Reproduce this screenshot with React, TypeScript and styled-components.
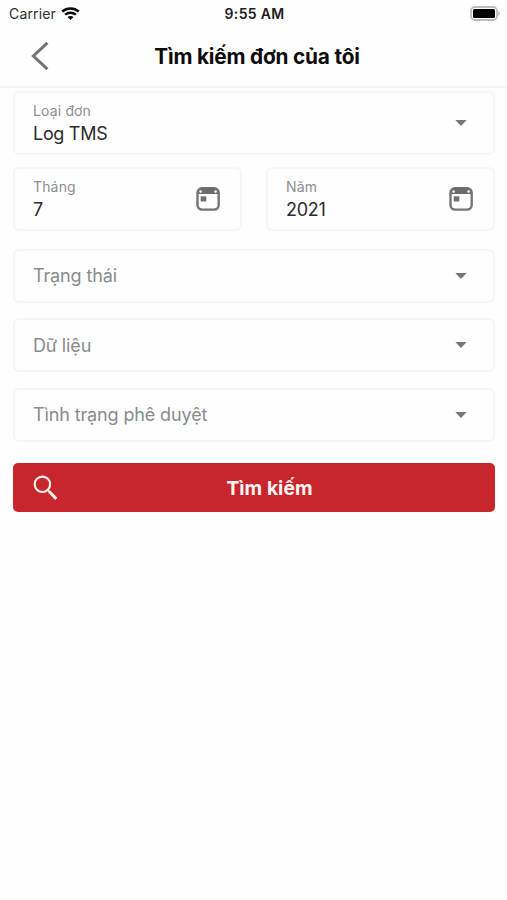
import React from "react";
import styled, { createGlobalStyle } from "styled-components";

const GlobalStyle = createGlobalStyle`
  * { box-sizing: border-box; }
  body {
    margin: 0;
    background: #fefefe;
    font-family: Inter, "Noto Sans", sans-serif;
  }
`;

const Screen = styled.div`
  width: 507px;
  height: 900px;
  background: #fefefe;
  overflow: hidden;
`;

const StatusBar = styled.div`
  display: grid;
  grid-template-columns: 1fr auto 1fr;
  align-items: center;
  height: 28px;
  padding: 0 7px 0 9px;
`;

const Carrier = styled.div`
  display: flex;
  align-items: center;
  gap: 5px;
  font-size: 14px;
  line-height: 28px;
  letter-spacing: 0.15px;
  color: #2c2c2c;
`;

const Clock = styled.div`
  font-size: 14px;
  font-weight: 600;
  line-height: 28px;
  letter-spacing: 0.3px;
  color: #1c1c1c;
`;

const BatterySlot = styled.div`
  display: flex;
  justify-content: flex-end;
  margin-top: -1px;
`;

const NavBar = styled.header`
  display: grid;
  grid-template-columns: 80px 1fr 73px;
  align-items: center;
  height: 60px;
  padding-bottom: 2px;
  border-bottom: 2px solid #f6f6f6;
`;

const BackButton = styled.button`
  display: flex;
  align-items: center;
  justify-content: center;
  height: 40px;
  padding: 0;
  border: 0;
  background: none;
`;

const Title = styled.h1`
  margin: 0;
  padding-top: 2px;
  text-align: center;
  font-size: 20.8px;
  font-weight: 650;
  line-height: 28px;
  letter-spacing: -0.18px;
  color: #0c0c0c;
`;

const Form = styled.form`
  display: flex;
  flex-direction: column;
  padding: 3px 12px 0 13px;
`;

const Pair = styled.div`
  display: grid;
  grid-template-columns: 1fr 1fr;
  column-gap: 24px;
  margin: 12px 0 18px;
`;

const Field = styled.div<{ $tall?: boolean }>`
  display: flex;
  align-items: center;
  justify-content: space-between;
  height: ${(p) => (p.$tall ? 64 : 54)}px;
  padding: 0 19px 0 18px;
  border: 2px solid #f5f6f6;
  border-radius: 6px;
`;

const FieldText = styled.div`
  display: flex;
  flex-direction: column;
`;

const Label = styled.span`
  font-size: 14px;
  line-height: 19px;
  letter-spacing: 0.15px;
  color: #8b8e92;
`;

const Value = styled.span`
  padding-top: 1px;
  font-size: 18px;
  line-height: 25px;
  letter-spacing: -0.3px;
  color: #2b2b2b;
`;

const Placeholder = styled.span`
  padding-top: 1px;
  font-size: 18px;
  line-height: 24px;
  letter-spacing: -0.13px;
  color: #878b8f;
`;

const IconSlot = styled.span`
  display: flex;
  justify-content: center;
  width: 26px;
`;

const Choices = styled.div`
  display: grid;
  row-gap: 15.5px;
  margin-top: -0.5px;
`;

const SearchButton = styled.button`
  display: grid;
  grid-template-columns: 64px 1fr 33px;
  align-items: center;
  height: 49px;
  margin: 21.5px 0 0;
  padding: 0;
  border: 0;
  border-radius: 5px;
  background: #c7262c;
  color: #fff5f2;
  font-family: inherit;
  font-size: 19.3px;
  font-weight: 650;
  letter-spacing: 0.05px;
`;

const SearchIconSlot = styled.span`
  display: flex;
  justify-content: center;
`;

const WifiIcon = () => (
  <svg width="19" height="14" viewBox="0 0 19 14" fill="none" stroke="#080808">
    <path d="M1.200 4.600C6 .4 13 .4 17.800 4.600" strokeWidth="2.600" />
    <path d="M4.100 7.700C7.200 5 11.800 5 14.900 7.700" strokeWidth="2.400" />
    <path d="M9.500 12.900L6.500 10C8.100 8.500 10.900 8.500 12.500 10Z" fill="#080808" stroke="none" />
  </svg>
);

const BatteryIcon = () => (
  <svg width="30" height="15" viewBox="0 0 30 15">
    <rect x="1" y="1" width="26" height="13" rx="4" fill="#fff" stroke="#bdbdbd" strokeWidth="1.800" />
    <rect x="3" y="3" width="22" height="9" rx="1.500" fill="#000" />
    <path d="M28.400 5.200C30.300 6 30.300 9 28.400 9.800Z" fill="#aaa" />
  </svg>
);

const BackIcon = () => (
  <svg width="20" height="30" viewBox="0 0 20 30" fill="none">
    <path d="M17.400 1.800L3.400 15L17.400 28.200" stroke="#737373" strokeWidth="3" />
  </svg>
);

const CaretIcon = () => (
  <svg width="12" height="6" viewBox="0 0 12 6">
    <path d="M0.300 0H11.700L6 6Z" fill="#777" />
  </svg>
);

const CalendarIcon = () => (
  <svg width="24" height="24" viewBox="0 0 24 24">
    <rect x="1.500" y="1.200" width="21.200" height="21.400" rx="4.500" fill="none" stroke="#757575" strokeWidth="2.400" />
    <path d="M5.500 0.500H18.700L22 3V7H2.200V3Z" fill="#6c6c6c" />
    <circle cx="4.600" cy="4.600" r="1.300" fill="#f4f4f4" />
    <circle cx="19.600" cy="4.600" r="1.300" fill="#f4f4f4" />
    <rect x="4.700" y="9.300" width="5.600" height="5.200" fill="#707070" />
  </svg>
);

const SearchIcon = () => (
  <svg width="26" height="26" viewBox="0 0 26 26" fill="none" stroke="#fff2ed">
    <circle cx="10.400" cy="9.300" r="7.700" strokeWidth="2.100" />
    <path d="M15.500 14.700L17.500 16.700" strokeWidth="1.700" />
    <path d="M17.200 16.500L24.300 23.900" strokeWidth="3" />
  </svg>
);

const dates = [
  { label: "Tháng", value: "7" },
  { label: "Năm", value: "2021" },
];
const choices = ["Trạng thái", "Dữ liệu", "Tình trạng phê duyệt"];

export default function App() {
  return (
    <Screen>
      <GlobalStyle />
      <StatusBar>
        <Carrier>
          Carrier
          <WifiIcon />
        </Carrier>
        <Clock>9:55 AM</Clock>
        <BatterySlot>
          <BatteryIcon />
        </BatterySlot>
      </StatusBar>
      <NavBar>
        <BackButton type="button" aria-label="Quay lại">
          <BackIcon />
        </BackButton>
        <Title>Tìm kiếm đơn của tôi</Title>
      </NavBar>
      <Form>
        <Field $tall>
          <FieldText>
            <Label>Loại đơn</Label>
            <Value>Log TMS</Value>
          </FieldText>
          <IconSlot>
            <CaretIcon />
          </IconSlot>
        </Field>
        <Pair>
          {dates.map((d) => (
            <Field $tall key={d.label}>
              <FieldText>
                <Label>{d.label}</Label>
                <Value>{d.value}</Value>
              </FieldText>
              <IconSlot>
                <CalendarIcon />
              </IconSlot>
            </Field>
          ))}
        </Pair>
        <Choices>
          {choices.map((c) => (
            <Field key={c}>
              <Placeholder>{c}</Placeholder>
              <IconSlot>
                <CaretIcon />
              </IconSlot>
            </Field>
          ))}
        </Choices>
        <SearchButton type="button">
          <SearchIconSlot>
            <SearchIcon />
          </SearchIconSlot>
          <span>Tìm kiếm</span>
        </SearchButton>
      </Form>
    </Screen>
  );
}
